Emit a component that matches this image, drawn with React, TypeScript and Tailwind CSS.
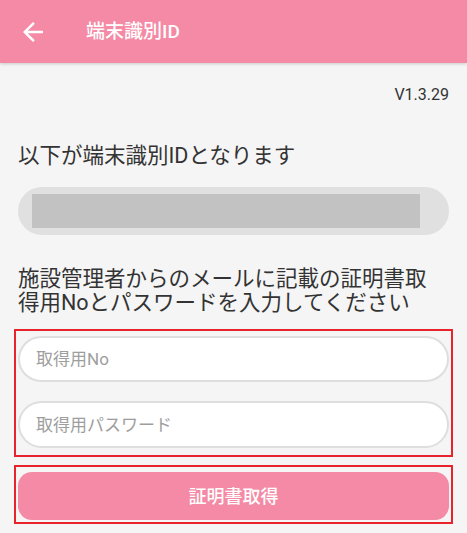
import React from "react";

const font = { fontFamily: 'Roboto, "Noto Sans CJK JP", sans-serif' };

const BackArrow = () => (
  <svg width="30" height="30" viewBox="0 0 24 24" fill="white">
    <path d="M20 11H7.83l5.59-5.59L12 4l-8 8 8 8 1.41-1.41L7.83 13H20v-2z" />
  </svg>
);

const App = () => {
  return (
    <div className="w-[467px] h-[533px] bg-[#f5f5f5] overflow-hidden" style={font}>
      {/* header */}
      <header className="h-[63px] bg-[#f48aa5] flex items-center shadow-[0_1px_3px_rgba(0,0,0,0.18)] relative">
        <div className="ml-[18px] flex items-center">
          <BackArrow />
        </div>
        <h1 className="ml-[38px] text-[19px] font-medium text-white leading-none">端末識別ID</h1>
      </header>

      <div className="px-[18px]">
        <div className="mt-[22px] text-right text-[16px] leading-[20px] text-[#333]">V1.3.29</div>

        <p className="mt-[36px] text-[21.5px] leading-[30px] text-[#333]">以下が端末識別IDとなります</p>

        <div className="mt-[16px] h-[48px] rounded-full bg-[#e0e0e0] flex items-center pl-[14px] pr-[29px]">
          <div className="h-[34px] w-full bg-[#c2c2c2]" />
        </div>

        <p className="mt-[32px] pr-[4px] text-[21.5px] leading-[24px] text-[#333]">
          施設管理者からのメールに記載の証明書取得用Noとパスワードを入力してください
        </p>
      </div>

      <div className="mx-[14px] mt-[14px] border-2 border-[#e8232c] pt-[5px] px-[2px] pb-[7px] flex flex-col gap-[19px]">
        <input
          className="h-[46px] rounded-full border-2 border-[#dedede] bg-white px-[16px] text-[17px] text-[#333] placeholder:text-[#9e9e9e] outline-none"
          style={font}
          placeholder="取得用No"
        />
        <input
          type="text"
          className="h-[47px] rounded-full border-2 border-[#dedede] bg-white px-[16px] text-[17px] text-[#333] placeholder:text-[#9e9e9e] outline-none"
          style={font}
          placeholder="取得用パスワード"
        />
      </div>

      <div className="mx-[14px] mt-[8px] border-2 border-[#e8232c] pt-[5px] px-[2px] pb-[2px]">
        <button
          className="w-full h-[48px] rounded-[14px] bg-[#f48aa5] text-white text-[18px] font-medium"
          style={font}
        >
          証明書取得
        </button>
      </div>
    </div>
  );
};

export default App;
